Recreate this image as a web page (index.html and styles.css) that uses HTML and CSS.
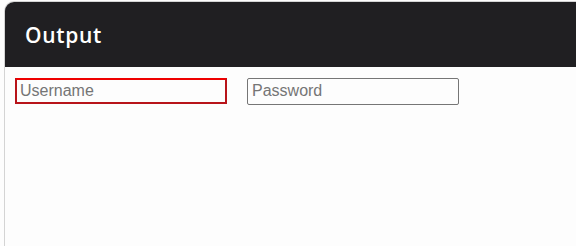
FILE: index.html
```html
<!DOCTYPE html>
<html lang="en">
<head>
  <meta charset="UTF-8" />
  <title>Output</title>
  <link rel="stylesheet" href="styles.css">
</head>
<body>
  <div class="panel">
    <header class="panel-head">
      <h1>Output</h1>
    </header>
    <div class="panel-body">
      <form class="login-form">
        <input type="text" class="field error" placeholder="Username">
        <input type="password" class="field" placeholder="Password">
      </form>
    </div>
  </div>
</body>
</html>
```

FILE: styles.css
```css
html, body {
  height: 100%;
}
body {
  margin: 0;
  padding: 1px 0 0 4px;
  box-sizing: border-box;
  overflow: hidden;
  background: #fdfdfd;
  font-family: 'Liberation Sans', Arial, sans-serif;
}
.panel {
  height: 100%;
  border-top: 1px solid #d4d4d4;
  border-left: 1px solid #d4d4d4;
  border-top-left-radius: 10px;
  overflow: hidden;
  background: #fdfdfd;
}
.panel-head {
  background-color: #201f22;
  height: 65px;
  display: flex;
  align-items: center;
  padding-left: 20px;
}
.panel-head h1 {
  margin: 0;
  color: #fff;
  font-family: 'Open Sans', sans-serif;
  font-weight: 600;
  font-size: 21px;
  letter-spacing: 0.7px;
  padding-top: 1px;
}
.panel-body {
  padding: 11px 10px;
}
.login-form {
  display: flex;
  gap: 20px;
}
.field {
  box-sizing: border-box;
  width: 212px;
  height: 27px;
  margin: 0;
  padding: 0 4px 1px;
  font-family: 'Liberation Sans', Arial, sans-serif;
  font-size: 16px;
  color: #222;
  background: #fdfdfd;
  border: 1px solid #767676;
  border-radius: 2px;
}
.field::placeholder {
  color: #757575;
}
.field.error {
  height: 26px;
  border: 2px solid #b8141a;
  border-top-color: #e00;
  border-radius: 0;
  padding: 0 3px;
}
```
